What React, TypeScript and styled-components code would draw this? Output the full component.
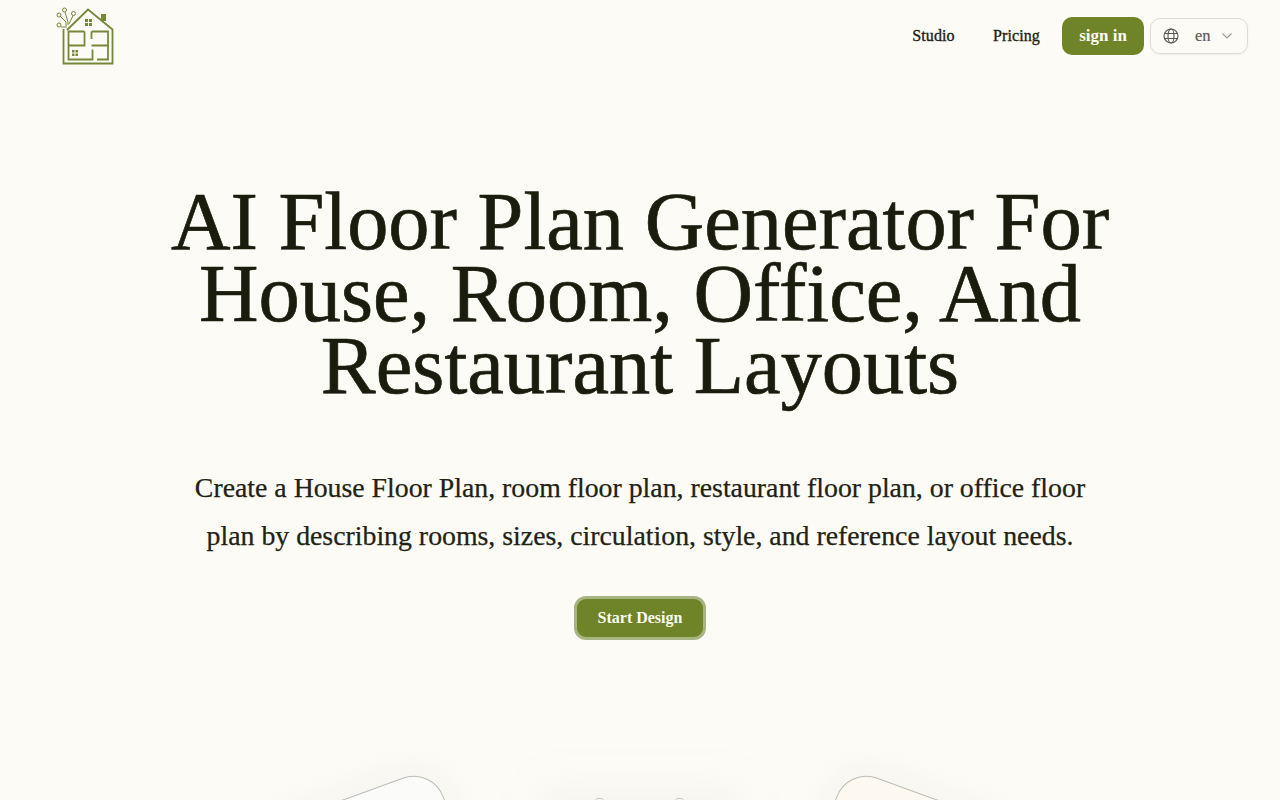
import React from "react";
import styled, { createGlobalStyle } from "styled-components";

const Global = createGlobalStyle`
  html, body { margin: 0; padding: 0; height: 100%; background: #fcfbf5; overflow: hidden; }
  body { font-family: "Liberation Serif", "Noto Serif", serif; color: #1a1d0e; }
`;
const Page = styled.div`
  position: relative; width: 1280px; height: 800px; overflow: hidden; background: #fcfbf5;
`;
const Header = styled.header`
  display: flex; align-items: center; justify-content: space-between;
  height: 72px; padding: 0 32px 0 56px; box-sizing: border-box;
`;
const LogoWrap = styled.a`display: block; width: 60px; height: 60px;`;
const Nav = styled.nav`display: flex; align-items: center;`;
const NavLink = styled.a<{ $w: number }>`
  width: ${p => p.$w}px; text-align: center; font-size: 16px; font-weight: 400; color: #1c1f12;
  -webkit-text-stroke: 0.35px #1c1f12; letter-spacing: 0.1px; padding-right: 7px; box-sizing: border-box;
`;
const SignIn = styled.button`
  width: 82px; height: 38px; border: none; border-radius: 10px; background: #6f8329; color: #fdfdf5;
  font: 700 17px "Liberation Serif", serif; padding: 0;
`;
const Lang = styled.div`
  display: flex; align-items: center; width: 98px; height: 36px; margin-left: 6px; box-sizing: border-box;
  border: 1px solid #dedcd4; border-radius: 10px; padding: 0 15px 0 12px; color: #5b5d54;
  font-size: 16.5px; -webkit-text-stroke: 0.2px #5b5d54; box-shadow: 0 1px 2px rgba(0,0,0,.05);
`;
const LangText = styled.span`margin-left: 16px; margin-right: auto;`;
const Hero = styled.section`
  display: flex; flex-direction: column; align-items: center; padding-top: 114px;
`;
const Title = styled.h1`
  margin: 0; width: 1100px; text-align: center; font-size: 82.4px; line-height: 72px; font-weight: 400;
  color: #1a1d0e; -webkit-text-stroke: 0.7px #1a1d0e;
`;
const Sub = styled.p`
  margin: 62px 0 0; width: 920px; text-align: center; font-size: 27.8px; line-height: 48px; color: #1f2214;
  -webkit-text-stroke: 0.25px #1f2214;
`;
const Cta = styled.button`
  margin-top: 36px; width: 132px; height: 44px; box-sizing: border-box; border: 3px solid #a7b583;
  border-radius: 12px; background: #6f8329; color: #fafbef; font: 700 16px "Liberation Serif", serif; padding: 0;
`;
const Tile = styled.div<{ $left: number; $rot: number; $bg: string }>`
  position: absolute; left: ${p => p.$left}px; top: 795px; width: 200px; height: 200px;
  border-radius: 32px; border: 1px solid #bcbcb7; background: ${p => p.$bg}; box-sizing: border-box;
  transform: rotate(${p => p.$rot}deg);
  box-shadow: 0 0 30px 12px rgba(240,239,233,.45);
`;
const MidGlow = styled.div`
  position: absolute; left: 560px; top: 805px; width: 160px; height: 100px;
  box-shadow: 0 0 30px 14px rgba(240,239,233,.5);
`;
const Mark = styled.div<{ $left: number }>`
  position: absolute; left: ${p => p.$left}px; top: 798px; width: 9px; height: 4px;
  border-top: 1px solid #c4c4bf; border-radius: 50%;
`;

const Logo = () => (
  <svg width="60" height="60" viewBox="56 7 60 60" fill="none" stroke="#75883a" strokeWidth="1.6">
    <path d="M101 15h5v7h-5z" fill="#75883a" stroke="none" />
    <path d="M67 31 88 10.500l24.500 20V64.500H63.500V30" strokeWidth="1.8" />
    <path d="M84.500 32.500H68.500v28h24v-10M68.500 46.500H84.500V32.500M91.500 32.500h16.500V60.500H97M91.500 46.500h16.500M91.500 32.500V40" strokeWidth="1.8" />
    <path d="M85 20h3v3h-3zM89 20h3v3h-3zM85 24h3v3h-3zM89 24h3v3h-3zM72 51h2.500v2.500H72zM75.500 51H78v2.500h-2.500zM72 54.500h2.500V57H72zM75.500 54.500H78V57h-2.500z" fill="#75883a" stroke="none" />
    <circle cx="59" cy="16" r="2" strokeWidth="1" />
    <circle cx="64.500" cy="11" r="2" strokeWidth="1" />
    <circle cx="73.500" cy="14.500" r="2" strokeWidth="1" />
    <circle cx="59" cy="26" r="2" strokeWidth="1" />
    <path d="M60.500 17.500 66 23v4M65 13l3 10v3M73 16.500 69 25M61 28h6" strokeWidth="1" />
  </svg>
);

const Globe = () => (
  <svg width="16" height="16" viewBox="0 0 16 16" fill="none" stroke="#55574e" strokeWidth="1.1">
    <circle cx="8" cy="8" r="7" /><ellipse cx="8" cy="8" rx="3" ry="7" /><path d="M1 5.500h14M1 10.500h14" />
  </svg>
);
const Chevron = () => (
  <svg width="10" height="6" viewBox="0 0 10 6" fill="none" stroke="#9a9b93" strokeWidth="1.1"><path d="M.5.500 5 5 9.500.500" /></svg>
);

export default function App() {
  return (
    <Page>
      <Global />
      <Header>
        <LogoWrap><Logo /></LogoWrap>
        <Nav>
          <NavLink $w={82}>Studio</NavLink>
          <NavLink $w={84}>Pricing</NavLink>
          <SignIn>sign in</SignIn>
          <Lang><Globe /><LangText>en</LangText><Chevron /></Lang>
        </Nav>
      </Header>
      <Hero>
        <Title>AI Floor Plan Generator For House, Room, Office, And Restaurant Layouts</Title>
        <Sub>Create a House Floor Plan, room floor plan, restaurant floor plan, or office floor plan by describing rooms, sizes, circulation, style, and reference layout needs.</Sub>
        <Cta>Start Design</Cta>
      </Hero>
      <MidGlow />
      <Tile $left={273} $rot={-20} $bg="#fbfbfa" />
      <Tile $left={807} $rot={20} $bg="#fdf9f1" />
      <Mark $left={595} />
      <Mark $left={675} />
    </Page>
  );
}
